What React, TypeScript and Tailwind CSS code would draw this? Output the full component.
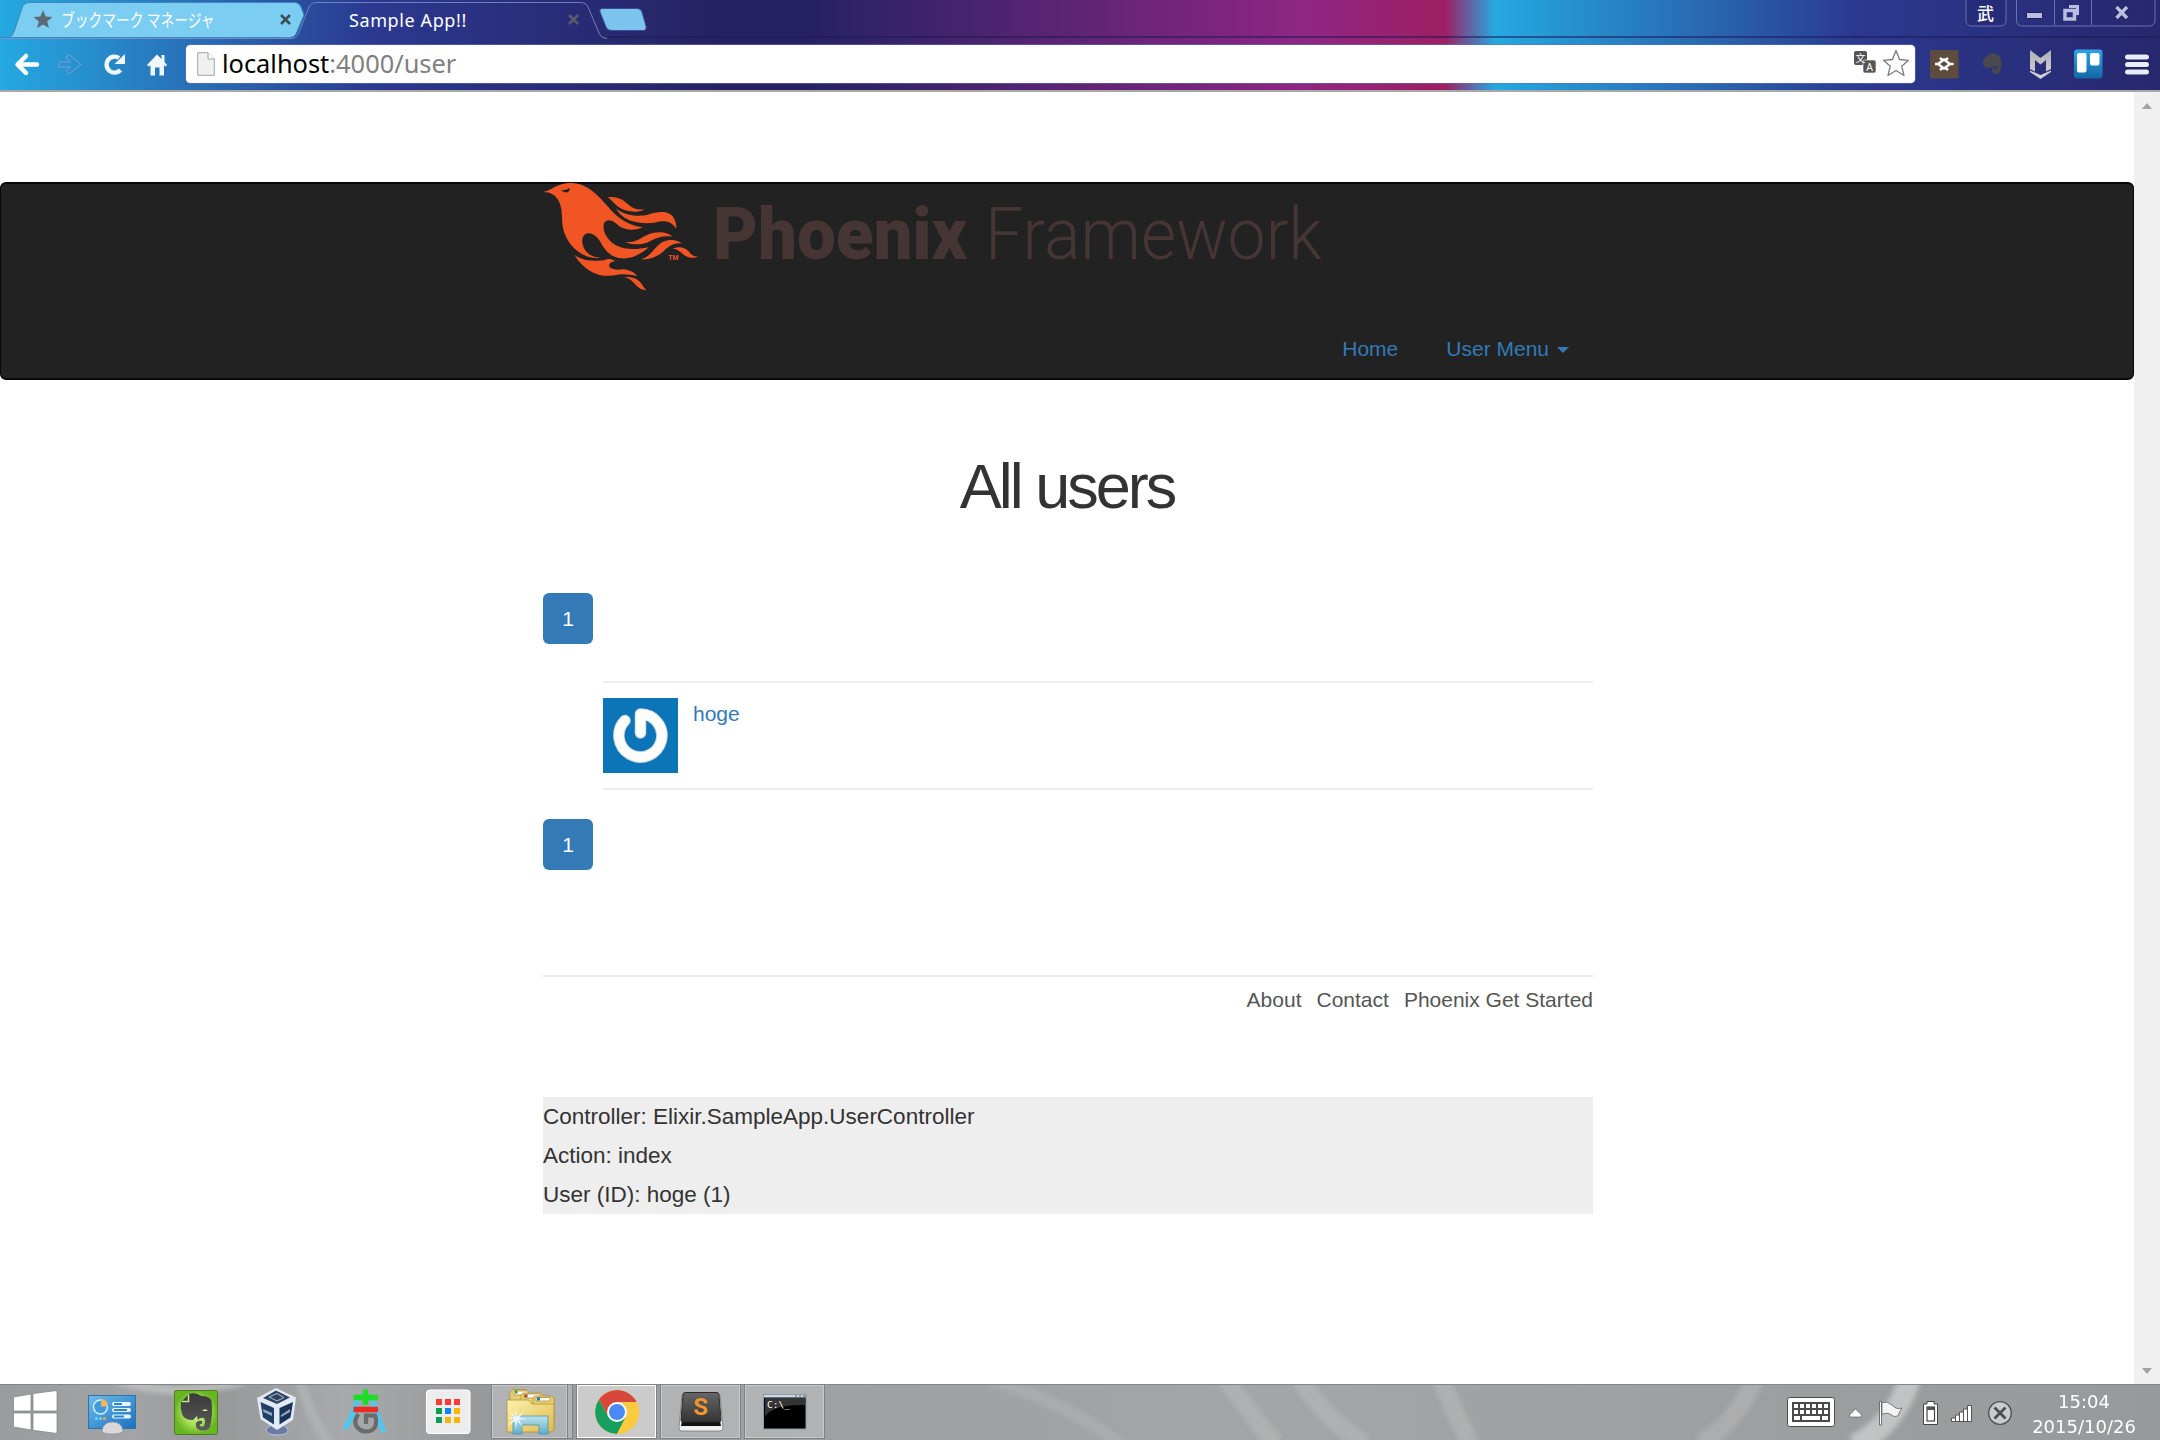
import React from "react";

const Logo = () => (
  <svg className="block shrink-0 overflow-visible" width="790" height="108" viewBox="542 184 790 108">
    <g transform="translate(536 178) scale(0.33333)" fill="#f15524">
      <path d="M22 42C50 35 60 18 100 15C150 12 185 50 215 85C240 115 270 142 320 148C300 158 270 158 250 145C235 130 220 120 206 132C195 150 210 185 240 202C270 217 300 215 338 208C320 225 290 243 258 241C225 240 205 215 195 195C185 175 165 160 148 168C132 180 138 210 155 225C165 235 180 238 194 239C160 245 125 225 105 200C85 175 78 150 78 115C78 80 65 42 22 42Z" />
      <path fill="#222" d="M75 36Q90 38 102 30Q100 45 88 43Q80 42 75 36Z" />
      <path d="M216 57C245 55 262 65 275 78C290 92 305 97 326 94C315 103 290 103 268 97C245 90 235 75 216 57Z" />
      <path d="M240 92C265 110 300 118 335 110C365 102 395 95 412 118C420 130 421 140 421 152C410 135 395 128 375 130C345 138 320 138 290 130C265 122 250 108 240 92Z" />
      <path d="M268 192C300 195 315 178 335 170C365 158 395 162 410 176C385 172 365 178 345 188C320 202 290 202 268 192Z" />
      <path d="M314 244C345 238 355 205 380 192C400 182 425 185 437 196C410 193 395 208 380 222C360 238 340 246 314 244Z" />
      <path d="M411 212C430 203 448 208 458 220C466 232 475 237 486 235C475 243 455 240 443 230C432 220 425 213 411 212Z" />
      <path d="M115 230C140 250 180 250 205 247C218 240 230 243 238 250C225 250 218 258 220 266C228 276 245 276 262 274C280 276 296 283 303 294C280 290 265 287 245 290C225 295 200 295 180 287C150 275 130 255 115 230Z" />
      <path d="M264 297C290 295 305 302 315 315C322 325 325 332 331 336C315 336 305 328 297 318C287 308 280 300 264 297Z" />
      <text x="397" y="246" fontSize="20" fontWeight="700" fontFamily="Roboto, sans-serif" textLength="30" lengthAdjust="spacingAndGlyphs">TM</text>
    </g>
    <g fill="#463535" fontFamily="Roboto, sans-serif">
      <text x="713" y="258.500" fontSize="72" fontWeight="900" textLength="254" lengthAdjust="spacingAndGlyphs">Phoenix</text>
      <text x="985" y="258.500" fontSize="72" fontWeight="300" textLength="337" lengthAdjust="spacingAndGlyphs">Framework</text>
    </g>
  </svg>
);

const Tabs = () => (
  <div className="relative flex h-[38px] items-start">
    <svg className="absolute left-0 top-0" width="2160" height="40" viewBox="0 0 2160 40" fill="none">
      <path d="M0 37.500H8Q12 37 14 32L22 8Q24 2.500 29 2.500H294Q299 2.500 301 7L304 15L296 34Q294 37.500 290 37.500Z" fill="#7bcdf1" stroke="#3f86bd" strokeWidth="1" />
      <path d="M0 38.500H292Q297 38 299 32L309 7Q311 2.500 316 2.500H580Q586 2.500 588 7L599 33Q601 38 607 38.500" stroke="#7f95cd" strokeOpacity=".8" />
      <path d="M607 37H2160" stroke="#1d1c58" strokeWidth="1.600" strokeOpacity=".75" />
      <path d="M603 8.500H637Q641 8.500 642 12L646 26Q647 30.500 643 30.500H612Q607 30.500 606 27L600 12Q599 8.500 603 8.500Z" fill="#7cc4ee" stroke="#3a4c9c" />
      <path transform="translate(33 10)" fill="#5c6a74" d="M10 0L12.600 6.500L19.500 7L14.200 11.400L16 18L10 14.400L4 18L5.800 11.400L.5 7L7.400 6.500Z" />
      <path d="M281 15L290 24M290 15L281 24" stroke="#3d4c57" strokeWidth="2.500" />
      <path d="M569 15L578 24M578 15L569 24" stroke="#595c6a" strokeWidth="2.500" />
    </svg>
    <div className="relative flex h-[38px] w-[300px] items-center pl-[61px]">
      <span className="origin-left scale-x-[0.765] whitespace-nowrap font-['Noto_Sans_CJK_JP',sans-serif] text-[18px] leading-none text-white">ブックマーク マネージャ</span>
    </div>
    <div className="relative flex h-[38px] items-center pl-[49px] pt-[1px]">
      <span className="whitespace-nowrap font-['Noto_Sans',sans-serif] text-[18px] leading-none tracking-[0.6px] text-white">Sample App!!</span>
    </div>
    <svg className="ml-auto overflow-visible" width="196" height="30" viewBox="1964 0 196 30" fill="none">
      <path d="M1966 0V20Q1966 26 1972 26H2000Q2006 26 2006 20V0" fill="#272c78" stroke="#6a71b6" />
      <path d="M2016.500 0V20Q2016.500 26 2022 26H2149Q2155 26 2155 20V0M2054.500 0V25M2091.500 0V25" stroke="#6a71b6" />
      <text x="1985.500" y="20" fontSize="17" fontWeight="500" fill="#fff" textAnchor="middle" fontFamily="Noto Sans CJK JP, sans-serif">武</text>
      <rect x="2026.500" y="12.500" width="16" height="6" rx="1" fill="#b9bde2" stroke="#1a1d55" />
      <path d="M2069 5H2079V15H2076V8H2069Z" fill="#b9bde2" />
      <path d="M2065 10.500H2074.500V19H2065Z" stroke="#b9bde2" strokeWidth="3.500" />
      <path d="M2116.500 7L2127 18M2127 7L2116.500 18" stroke="#1a1d55" strokeWidth="5.500" />
      <path d="M2116.500 7L2127 18M2127 7L2116.500 18" stroke="#b9bde2" strokeWidth="3.500" />
    </svg>
  </div>
);

const Toolbar = () => (
  <div className="flex h-[52px] items-start pt-[6px]">
    <svg width="186" height="42" viewBox="0 44 186 42" fill="none">
      <path d="M37 64.500H18M26 56L17.500 64.500L26 73" stroke="#fff" strokeWidth="4.500" strokeLinejoin="round" strokeLinecap="round" />
      <path d="M59 62H70L66 57L69 54.500L81 64.500L69 74L66 71L70 67H59Z" stroke="#5f9bd3" strokeWidth="1.300" />
      <path d="M120.500 70A8 8 0 1 1 119 58" stroke="#eff6fc" strokeWidth="4.400" />
      <path d="M125 54V64H114.500Z" fill="#eff6fc" />
      <path fill="#eff6fc" d="M157 54.500L147 65L148.500 66.500L150.500 65.500V75.500H155V67.500H159.500V75.500H164V65.500L166 66.500L167 65L164.500 62V55H161.500V59Z" />
    </svg>
    <div className="mt-px flex h-[38px] w-[1729px] items-center rounded-[4px] bg-white pl-[11px] outline outline-1 outline-[#5b6fb5]/60">
      <svg width="18" height="24" viewBox="0 0 18 24">
        <path d="M.7.700H11L17.300 7V23.300H.7Z" fill="#f0f0f0" stroke="#a4a4a4" />
        <path d="M11 .7V7H17.300" fill="#fff" stroke="#a4a4a4" />
      </svg>
      <div className="ml-[7px] whitespace-nowrap font-['Noto_Sans',sans-serif] text-[25.4px] leading-none text-[#808080]">
        <span className="text-black">localhost</span>:4000/user
      </div>
      <svg className="ml-auto mr-[3px] overflow-visible" width="60" height="32" viewBox="1852 49 60 32">
        <rect x="1854" y="52" width="13" height="14" rx="2" fill="#555" />
        <rect x="1863" y="61" width="13" height="13" rx="2" fill="#555" stroke="#fff" strokeWidth=".6" />
        <text x="1860.500" y="63" fontSize="10" fill="#fff" textAnchor="middle" fontFamily="Noto Sans CJK JP, sans-serif">文</text>
        <text x="1869.500" y="72" fontSize="10.500" fill="#fff" textAnchor="middle" fontFamily="Noto Sans, sans-serif">A</text>
        <path fill="#fff" stroke="#7b7b7b" strokeWidth="1.300" strokeLinejoin="round" d="M1896 51.500L1899.500 60.500L1908.500 61.300L1901.700 67.200L1904 76.500L1896 71.500L1888 76.500L1890.300 67.200L1883.500 61.300L1892.500 60.500Z" />
      </svg>
    </div>
    <svg className="ml-auto" width="235" height="42" viewBox="1925 44 235 42" fill="none">
      <defs>
        <linearGradient id="tr" x1="0" y1="0" x2="0" y2="1"><stop stopColor="#2da4ea" /><stop offset="1" stopColor="#1467a4" /></linearGradient>
        <linearGradient id="mc" x1="0" y1="0" x2="0" y2="1"><stop stopColor="#aeb0b4" /><stop offset="1" stopColor="#d4d5da" /></linearGradient>
      </defs>
      <rect x="1930" y="50" width="28.500" height="28.500" fill="#5e4c3f" />
      <path d="M1944 59.500L1950 64L1944 68.500L1938 64Z" stroke="#fff" strokeWidth="2.400" />
      <path d="M1935 64H1938M1950 64H1953.500M1940 58L1943 60.500M1948 58L1945 60.500M1940 70L1943 67.500M1948 70L1945 67.500" stroke="#fff" strokeWidth="2.400" />
      <path d="M1984 59L1989 54Q1994 52 1998 55Q2003 59 2001 68Q2000 75 1995 74Q1991 72 1992 69L1994 66Q1988 70 1984 66Q1982 62 1984 59Z" fill="#48484d" />
      <path d="M1994 70Q1994 66 1998 67" stroke="#2a3180" strokeWidth="1.500" />
      <path fill="url(#mc)" d="M2030 50L2040.500 58L2051 50V69L2046 71.500V60L2040.500 64.500L2035 60V71.500L2030 69ZM2030 70.500L2040.500 75L2051 70.500V72L2040.500 79L2030 72Z" />
      <rect x="2074" y="49.500" width="28.500" height="29" rx="3" fill="url(#tr)" />
      <rect x="2077" y="53" width="9.500" height="19.500" rx="2" fill="#fff" /><rect x="2090" y="53" width="9.500" height="12.500" rx="2" fill="#fff" />
      <path d="M2127.500 57H2146.500M2127.500 64.500H2146.500M2127.500 72H2146.500" stroke="#1c2060" strokeWidth="6.500" strokeLinecap="round" />
      <path d="M2127.500 57H2146.500M2127.500 64.500H2146.500M2127.500 72H2146.500" stroke="#e9ebf7" strokeWidth="5" strokeLinecap="round" />
    </svg>
  </div>
);

const PageButton = () => (
  <div className="flex h-[51px] w-[50px] items-center justify-center rounded-[6px] bg-[#337ab7] text-[21px] text-white">1</div>
);

const Avatar = () => (
  <svg width="75" height="75" viewBox="0 0 75 75" fill="none">
    <rect width="75" height="75" fill="#0b75b8" />
    <g strokeWidth="11.500" strokeLinecap="round" strokeLinejoin="round">
      <path d="M22 22.500A21.500 21.500 0 1 0 37.500 16V35" stroke="#cfd9dc" />
      <path d="M22 22.500A21.500 21.500 0 1 0 37.500 16V35" stroke="#fdfdfb" strokeWidth="9.500" />
    </g>
  </svg>
);

const StartIcons = () => (
  <svg className="shrink-0" width="490" height="56" viewBox="0 1384 490 56" fill="none">
    <defs>
      <linearGradient id="cp" x1="0" y1="0" x2="1" y2="1"><stop stopColor="#6cbdec" /><stop offset="1" stopColor="#1d6fc0" /></linearGradient>
      <radialGradient id="en"><stop stopColor="#d6f79a" /><stop offset=".6" stopColor="#a5dc55" /><stop offset="1" stopColor="#68b522" /></radialGradient>
      <linearGradient id="el" x1="0" y1="0" x2="0" y2="1"><stop stopColor="#3a3a3a" /><stop offset="1" stopColor="#5a5a5a" /></linearGradient>
    </defs>
    <path fill="#fff" stroke="#7d7f80" strokeWidth=".7" d="M13.500 1397L31 1394V1411H13.500ZM33 1393.600L57 1390.500V1411H33ZM13.500 1413H31V1430L13.500 1427ZM33 1413H57V1433.500L33 1430.300Z" />
    <rect x="88.500" y="1395.500" width="47" height="33" fill="url(#cp)" stroke="#3172a8" />
    <circle cx="100.500" cy="1407" r="7" fill="#3f9add" stroke="#cdeeff" strokeWidth="1.500" />
    <path d="M101 1406.500V1399A7.500 7.500 0 0 1 108 1406.500Z" fill="#f7b25c" />
    <path d="M114 1404H129M114 1410H129M114 1416.500H129" stroke="#e6f6ff" strokeWidth="4" strokeLinecap="round" />
    <path d="M114 1404H122M114 1410H127M114 1416.500H124" stroke="#2b84cc" strokeWidth="1.800" />
    <circle cx="96.500" cy="1418.500" r="1.500" fill="#6df" /><circle cx="100.500" cy="1418.500" r="1.500" fill="#6df" /><circle cx="104.500" cy="1418.500" r="1.500" fill="#fa3" />
    <path d="M102 1431Q103 1422 112.500 1422Q122 1422 123 1431Q122 1434 112.500 1434Q103 1434 102 1431Z" fill="#d9d9dc" stroke="#8d9094" strokeWidth=".7" />
    <rect x="174.500" y="1390.500" width="43" height="44" rx="2" fill="url(#en)" stroke="#4d7d1f" />
    <path d="M181 1402L189 1394Q196 1392 201 1396Q210 1396 211.500 1401Q213 1415 210 1427Q208 1431 201 1430.500Q195 1429 196 1423Q198 1420 202 1421V1424Q200 1423 199.500 1425.500Q201 1427.500 204 1426Q206 1421 204 1418Q200 1417 198 1420L197 1416L193 1420Q184 1420 182 1414Q180 1408 181 1402Z" fill="url(#el)" />
    <path d="M182 1401.500H188.500V1394.500" stroke="#c5ee83" strokeWidth="1.500" /><path d="M202 1411Q205 1407.500 208 1411Z" fill="#d4f29a" />
    <path d="M266 1429Q278 1418 288 1429Q289 1435 277 1435Q266 1435 266 1429Z" fill="#6c7ba4" stroke="#b7c4de" />
    <path d="M276 1388L296 1397.500L293 1420L277 1430L260.500 1419L257 1398Z" fill="#e1e9f5" />
    <path d="M276 1390.500L290 1397.500L277 1404L263 1398Z" fill="#31435f" /><path d="M269 1397L277 1393.500L284 1397.500L277 1401Z" stroke="#a9c2da" />
    <path d="M260.500 1402L274 1408V1424.500L263 1417.500Z" fill="#213f66" /><path d="M279.500 1408L293 1402L290.500 1417.500L279.500 1424.500Z" fill="#1a3358" />
    <path d="M263 1409L272 1413V1416L263.500 1412ZM281 1415L290 1409V1412L281 1417Z" fill="#96a8c1" />
    <path d="M354 1412L346 1427M376 1412L383 1430M357 1402L352 1414M373 1402L377 1414" stroke="#53c6f0" strokeWidth="5.500" strokeLinecap="round" />
    <path d="M365.500 1389.500V1405M353.500 1397.500H378" stroke="#1ddd29" strokeWidth="5.500" /><path d="M353.500 1409.500H378" stroke="#ea2c22" strokeWidth="5.500" />
    <path d="M358.500 1414Q353 1421 357 1427Q361 1431.500 366 1431.500Q373 1431.500 375.500 1426Q377 1420 375 1415.500H366V1424" stroke="#6a6b6d" strokeWidth="4.200" />
    <rect x="426.500" y="1390" width="43.500" height="43.500" rx="3" fill="#ededed" stroke="#fff" />
    <path d="M436 1399H442V1405H436ZM445 1399H451V1405H445ZM454 1399H460V1405H454Z" fill="#fb3935" />
    <path d="M436 1408H442V1414H436ZM436 1417H442V1423H436Z" fill="#0c9d57" /><path d="M445 1408H451V1414H445Z" fill="#1285f2" /><path d="M454 1408H460V1414H454ZM454 1417H460V1423H454ZM445 1417H451V1423H445Z" fill="#fbb506" />
  </svg>
);

const Wallpaper = () => (
  <svg className="absolute inset-0" width="2160" height="56" viewBox="0 0 2160 56" fill="none">
    <defs>
      <linearGradient id="wall"><stop stopColor="#9a9b9d" /><stop offset=".06" stopColor="#a3a4a5" /><stop offset=".1" stopColor="#97989a" /><stop offset=".16" stopColor="#a8a9aa" /><stop offset=".22" stopColor="#98999b" /><stop offset=".4" stopColor="#a0a1a3" /><stop offset=".6" stopColor="#a4a5a6" /><stop offset="1" stopColor="#98999b" /></linearGradient>
      <filter id="soft" x="-10%" y="-50%" width="120%" height="200%"><feGaussianBlur stdDeviation="2.500" /></filter>
    </defs>
    <rect width="2160" height="56" fill="url(#wall)" />
    <g filter="url(#soft)" stroke="#c2c3c3">
      <path d="M118 -4Q175 16 245 -4" strokeWidth="9" opacity=".8" />
      <path d="M300 -5Q310 35 330 60" strokeWidth="10" opacity=".4" />
      <path d="M990 -5Q1070 20 1120 60" strokeWidth="12" opacity=".3" />
      <path d="M1225 -5L1275 60M1300 -5Q1330 40 1365 60" strokeWidth="18" opacity=".4" />
      <path d="M1440 -5L1470 60M1755 -5Q1735 40 1700 60" strokeWidth="18" opacity=".4" />
      <path d="M1910 -5Q1895 40 1855 62" strokeWidth="22" />
    </g>
    <path d="M0 .5H2160" stroke="#858687" />
  </svg>
);

const Tray = () => (
  <svg className="shrink-0" width="240" height="56" viewBox="1780 1384 240 56" fill="none">
    <rect x="1787.500" y="1397.500" width="47" height="29" rx="2" fill="#fff" stroke="#4b4c4d" />
    <rect x="1792" y="1402" width="38" height="20" fill="#4a4a4a" />
    <path d="M1794 1406H1829M1794 1412H1829" stroke="#fff" strokeWidth="4" strokeDasharray="4 2" />
    <path d="M1794 1418H1800M1802 1418H1820M1822 1418H1828" stroke="#fff" strokeWidth="4" />
    <path d="M1849.500 1415L1855.500 1409L1861.500 1415V1417H1849.500Z" fill="#fff" stroke="#56606d" strokeWidth=".7" />
    <path d="M1879.500 1401.500H1881.500V1425H1879.500Z" fill="#fff" stroke="#555" strokeWidth=".8" />
    <path d="M1882 1402.500Q1888 1401 1892 1405Q1896 1410 1902 1408Q1899 1412 1898 1416Q1894 1418 1890 1414Q1886 1412 1882 1414.500Z" fill="#f3f3f3" stroke="#666" strokeWidth=".8" />
    <path d="M1927 1401.500H1934V1404H1937.500V1424.500H1923.500V1404H1927Z" fill="#fff" stroke="#444" />
    <rect x="1927" y="1407" width="7.500" height="14" fill="#fff" stroke="#444" strokeWidth="1.200" /><rect x="1927" y="1407" width="7.500" height="3" fill="#555" />
    <path d="M1951.500 1418H1955.500V1415H1959.500V1412H1963.500V1409H1967.500V1405.500H1971.500V1421.500H1951.500Z" fill="#fff" stroke="#555" />
    <path d="M1955.500 1418V1421M1959.500 1415V1421M1963.500 1412V1421M1967.500 1409V1421" stroke="#555" />
    <circle cx="2000" cy="1413" r="11.300" fill="#c9cacb" stroke="#4c4d4e" strokeWidth="1.300" />
    <path d="M1994.500 1407.500L2005.500 1418.500M2005.500 1407.500L1994.500 1418.500" stroke="#4c4d4e" strokeWidth="2.800" />
  </svg>
);

const Explorer = () => (
  <svg width="50" height="52" viewBox="504 1386 50 52">
    <defs><linearGradient id="fo" x1="0" y1="0" x2="1" y2="1"><stop stopColor="#fbf2ac" /><stop offset="1" stopColor="#dfba4d" /></linearGradient><linearGradient id="fb" x1="0" y1="0" x2="0" y2="1"><stop stopColor="#b8e4f4" /><stop offset="1" stopColor="#55afd8" /></linearGradient></defs>
    <g stroke="#b08f35" strokeWidth=".8">
      <path d="M509 1420V1392L512 1389.500H525L528 1393V1418Z" fill="#e6cf76" /><path d="M513 1391H527V1395H513Z" fill="#fff" />
      <path d="M520 1420V1395L522 1393H540L544 1397V1420Z" fill="#e9d47d" /><path d="M523 1394H539V1398H523Z" fill="#fff" />
      <path d="M532 1420V1398L534 1396H551L553 1399V1420Z" fill="#e9cf70" /><path d="M535 1397.500H549V1401H535Z" fill="#fff" />
      <path d="M506 1400H528L531 1404H553V1430L550 1432H506Z" fill="url(#fo)" />
    </g>
    <path d="M514 1390.500H516.500V1393.500H514Z" fill="#2a9d3c" /><path d="M523.500 1394.500H526.500V1397.500H523.500Z" fill="#c33a20" /><path d="M536 1397.500H539V1400.500H536Z" fill="#2579c0" />
    <path d="M512 1416H547V1434H538V1425H521V1434H512Z" fill="url(#fb)" stroke="#4391b8" strokeWidth=".8" opacity=".92" />
    <path d="M515 1408L516 1416L523 1412L518 1418L526 1419L518 1420L522 1427L516 1421L515 1430L514 1421L507 1426L512 1419L506 1418L512 1417L508 1411L514 1416Z" fill="#fff" opacity=".75" />
  </svg>
);

const Chrome = () => (
  <svg width="44" height="44" viewBox="-22 -22 44 44">
    <circle r="22" fill="#fcca3f" />
    <path d="M0 -10H19.600A22 22 0 0 0 -18 -12.500L-8.700 5Z" fill="#d8473b" />
    <path d="M-18 -12.500A22 22 0 0 0 0 22L9 5L-8.700 5Z" fill="#17a05d" />
    <path d="M0 -10H19.600A22 22 0 0 1 0 22L8.700 5Z" fill="#fcca3f" />
    <circle r="10" fill="#fff" /><circle r="8" fill="#4a8af4" />
  </svg>
);

const Sublime = () => (
  <svg className="overflow-visible" width="46" height="42" viewBox="0 0 46 42">
    <defs><linearGradient id="su" x1="0" y1="0" x2="0" y2="1"><stop stopColor="#666" /><stop offset="1" stopColor="#343434" /></linearGradient></defs>
    <path d="M4 4H42L45 37Q45 40 42 40H4Q1 40 1 37Z" fill="#f1f1f1" stroke="#777" strokeWidth=".8" />
    <path d="M4 30H42L43 35H3Z" fill="#111" />
    <path d="M7 1.500H39Q41 1.500 41 4L43 29Q43 31 41 31H5Q3 31 3 29L5 4Q5 1.500 7 1.500Z" fill="url(#su)" stroke="#2b2b2b" />
    <text x="23" y="24" textAnchor="middle" fontSize="24" fontWeight="700" fill="#f8952d" fontFamily="Roboto, sans-serif">S</text>
  </svg>
);

const Cmd = () => (
  <svg width="44" height="36" viewBox="0 0 44 36">
    <rect x=".5" y=".5" width="42.500" height="34.500" fill="#000" stroke="#8c9ba9" />
    <path d="M2 4V22Q12 10 42 11V4Z" fill="#343434" /><path d="M1 1H42.500V3.500H1Z" fill="#cdd9e6" /><path d="M32 2H34M36 2H38M40 2H42" stroke="#567" />
    <text x="4" y="13.500" fontSize="9.500" fill="#fff" fontFamily="DejaVu Sans Mono, monospace">C:\_</text>
  </svg>
);

const Task = ({ children, className }: { children: React.ReactNode; className: string }) => (
  <div className={"flex h-[55px] items-center justify-center border border-[#808182] " + className}>{children}</div>
);

export default function App() {
  return (
    <div className="flex h-[1440px] w-[2160px] flex-col overflow-hidden bg-white font-['Liberation_Sans',sans-serif]">
      <header className="h-[92px] shrink-0 border-b-2 border-[#a8a8a8] bg-[linear-gradient(90deg,#25a9e0_0px,#2b3990_370px,#262262_720px,#262262_810px,#8e2684_1300px,#9e1f63_1445px,#25a9e0_1495px,#2b3990_1855px,#262262_2250px)]">
        <Tabs />
        <Toolbar />
      </header>
      <div className="flex h-[1292px] shrink-0">
        <main className="w-[2134px]">
          <nav className="mt-[90px] h-[198px] rounded-[6px] border-x border-y-2 border-[#080808] bg-[#222]">
            <div className="mx-auto flex h-full w-[1050px] flex-col">
              <Logo />
              <div className="mt-[42px] flex justify-end pr-[23px] text-[21px] leading-[30px] text-[#337ab7]">
                <span>Home</span>
                <span className="ml-[48px]">User Menu</span>
                <span className="ml-[8px] mt-[13px] h-0 w-0 border-x-[6px] border-t-[6px] border-x-transparent border-t-[#337ab7]" />
              </div>
            </div>
          </nav>
          <div className="ml-[543px] w-[1050px] text-[#333]">
            <h1 className="mt-[72px] pr-[2px] text-center text-[63px] leading-[69px] tracking-[-3px]">All users</h1>
            <div className="mt-[72px]"><PageButton /></div>
            <div className="ml-[60px] mt-[37px] flex h-[109px] gap-[15px] border-y-2 border-[#eee] pt-[15px] text-[21px] leading-[30px] text-[#337ab7]">
              <Avatar />
              <span className="mt-px">hoge</span>
            </div>
            <div className="mt-[29px]"><PageButton /></div>
            <footer className="mt-[105px] flex justify-end gap-[15px] border-t-2 border-[#eaeaea] pt-[8px] text-[21px] leading-[30px] text-[#555]">
              <span>About</span><span>Contact</span><span>Phoenix Get Started</span>
            </footer>
            <div className="mt-[82px] h-[117px] bg-[#eee] text-[22.5px] leading-[39px]">
              <p>Controller: Elixir.SampleApp.UserController</p>
              <p>Action: index</p>
              <p>User (ID): hoge (1)</p>
            </div>
          </div>
        </main>
        <aside className="flex w-[26px] flex-col items-center justify-between bg-[#f0f0f0] pb-[10px] pt-[11px]">
          <span className="h-0 w-0 border-x-[5px] border-b-[6px] border-x-transparent border-b-[#a3a3a3]" />
          <span className="h-0 w-0 border-x-[5px] border-t-[6px] border-x-transparent border-t-[#a3a3a3]" />
        </aside>
      </div>
      <div className="relative flex h-[56px] shrink-0 overflow-hidden">
        <Wallpaper />
        <div className="relative flex w-full">
          <StartIcons />
          <div className="ml-[1px] flex gap-[3px]">
            <div className="flex">
              <Task className="w-[77px] bg-[#b1b2b3] shadow-[inset_0_0_0_1px_#c8c9ca]"><Explorer /></Task>
              <div className="h-[55px] w-[5px] border border-l-0 border-[#808182] bg-[#b1b2b3]" />
            </div>
            <Task className="w-[81px] bg-[#cbcbcb] shadow-[inset_0_0_0_1px_#fff]"><Chrome /></Task>
            <Task className="w-[81px] bg-[#b1b2b3] shadow-[inset_0_0_0_1px_#c8c9ca]"><Sublime /></Task>
            <Task className="w-[81px] bg-[#b1b2b3] shadow-[inset_0_0_0_1px_#c8c9ca]"><Cmd /></Task>
          </div>
          <div className="ml-auto flex">
            <Tray />
            <div className="flex w-[140px] flex-col items-center pr-[12px] pt-[5px] font-['DejaVu_Sans',sans-serif] text-[18px] leading-[25px] text-white">
              <span>15:04</span>
              <span>2015/10/26</span>
            </div>
          </div>
        </div>
      </div>
    </div>
  );
}
